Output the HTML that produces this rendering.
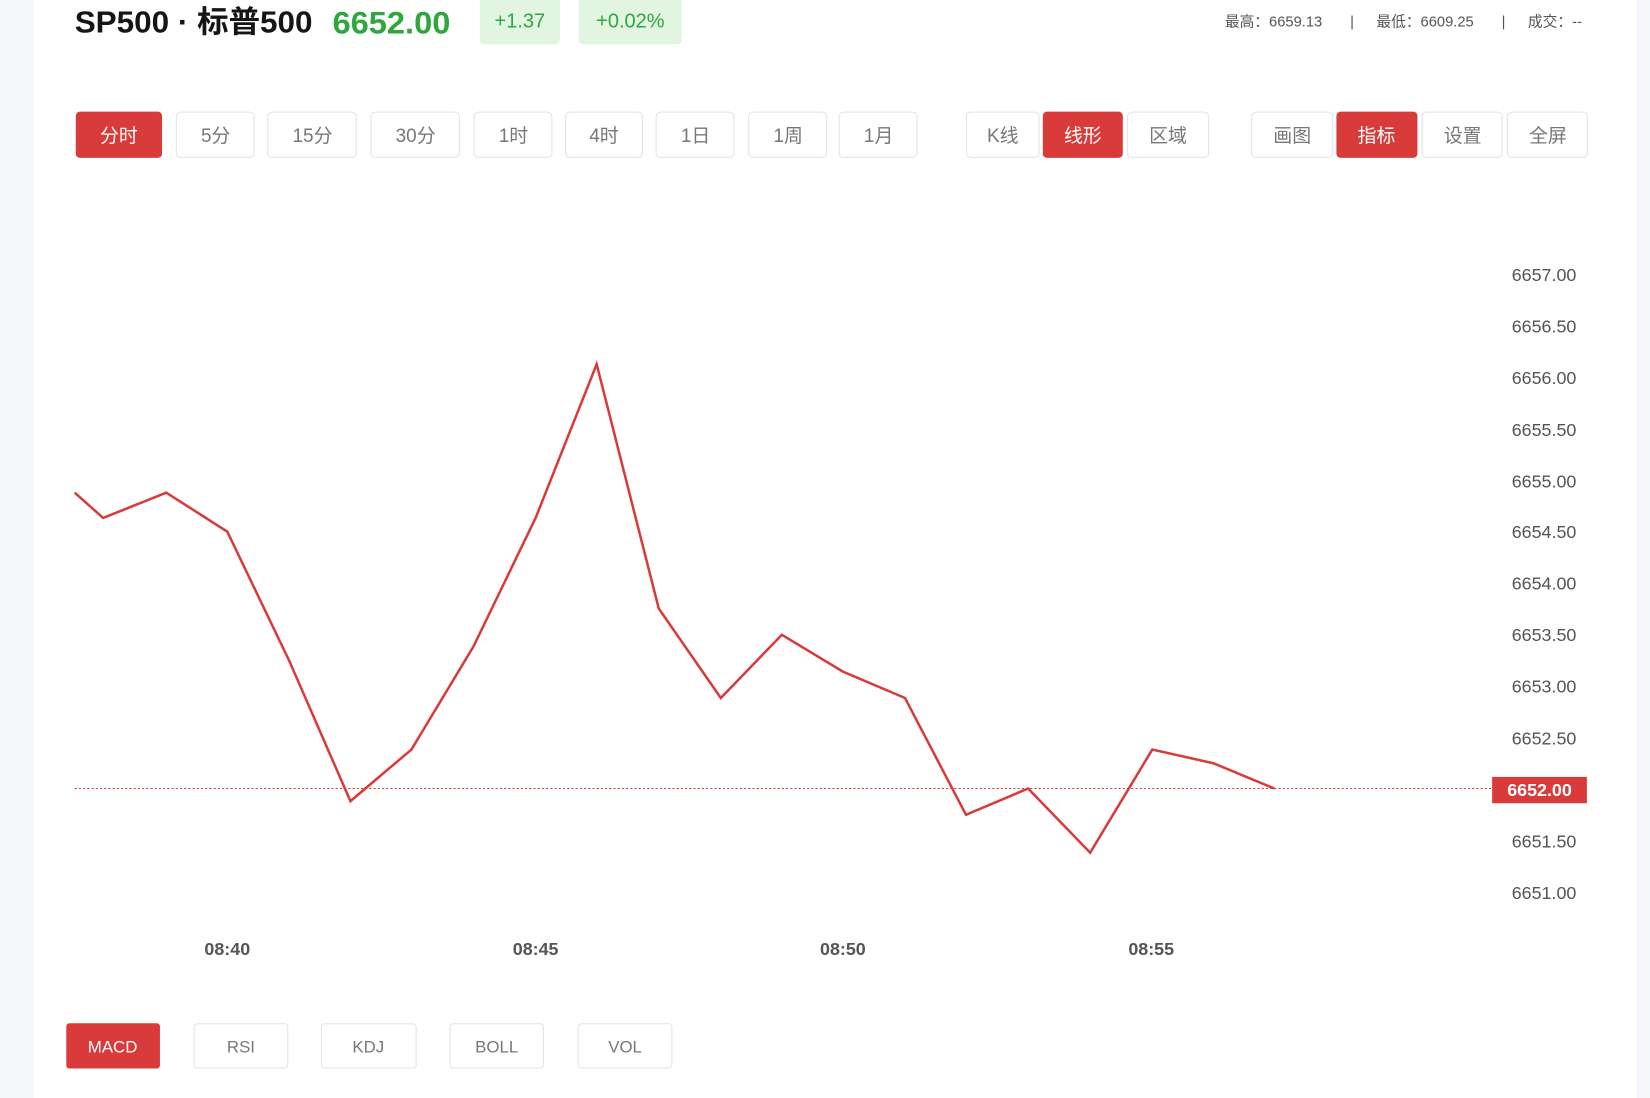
<!DOCTYPE html>
<html><head><meta charset="utf-8"><style>
html,body{margin:0;padding:0;background:#fff;width:1650px;height:1098px;overflow:hidden}
svg{display:block}
text{font-family:"Liberation Sans","Noto Sans CJK SC",sans-serif}
</style></head><body>
<svg width="1650" height="1098" viewBox="0 0 1568 1043" preserveAspectRatio="none" xmlns="http://www.w3.org/2000/svg">
<rect x="0" y="0" width="1568" height="1043" fill="#fff"/>
<rect x="0" y="0" width="32" height="1043" fill="#f5f6f9"/>
<rect x="1555" y="0" width="13" height="1043" fill="#f5f6f9"/>

<text x="71" y="31" font-size="29" font-weight="bold" fill="#151515" textLength="226" lengthAdjust="spacingAndGlyphs">SP500 · 标普500</text>
<text x="316" y="32" font-size="30" font-weight="bold" fill="#2ea83c" textLength="112" lengthAdjust="spacingAndGlyphs">6652.00</text>
<rect x="456" y="-6" width="76" height="48" rx="4" fill="#e1f5e1"/>
<text x="494" y="26" font-size="19" fill="#2ea83c" text-anchor="middle">+1.37</text>
<rect x="550" y="-6" width="98" height="48" rx="4" fill="#e1f5e1"/>
<text x="599" y="26" font-size="19" fill="#2ea83c" text-anchor="middle">+0.02%</text>

<g font-size="14" fill="#555">
<text x="1164" y="25">最高：6659.13</text>
<text x="1283" y="25">|</text>
<text x="1308" y="25">最低：6609.25</text>
<text x="1427" y="25">|</text>
<text x="1452" y="25">成交：--</text>
</g>

<g font-size="18" text-anchor="middle">
<rect x="72" y="106" width="82" height="44" rx="4" fill="#d93a3a"/><text x="113" y="135" fill="#fff">分时</text>
<g fill="#fff" stroke="#e3e3e3">
<rect x="167.5" y="106.5" width="74" height="43" rx="4"/>
<rect x="254.5" y="106.5" width="84" height="43" rx="4"/>
<rect x="352.5" y="106.5" width="84" height="43" rx="4"/>
<rect x="450.5" y="106.5" width="74" height="43" rx="4"/>
<rect x="537.5" y="106.5" width="73" height="43" rx="4"/>
<rect x="623.5" y="106.5" width="74" height="43" rx="4"/>
<rect x="711.5" y="106.5" width="74" height="43" rx="4"/>
<rect x="797.5" y="106.5" width="74" height="43" rx="4"/>
<rect x="918.5" y="106.5" width="69" height="43" rx="4"/>
<rect x="1071.5" y="106.5" width="77" height="43" rx="4"/>
<rect x="1189.5" y="106.5" width="77" height="43" rx="4"/>
<rect x="1351.5" y="106.5" width="76" height="43" rx="4"/>
<rect x="1432.5" y="106.5" width="76" height="43" rx="4"/>
</g>
<rect x="991" y="106" width="76" height="44" rx="4" fill="#d93a3a"/>
<rect x="1270" y="106" width="77" height="44" rx="4" fill="#d93a3a"/>
<g fill="#777">
<text x="205" y="135">5分</text>
<text x="297" y="135">15分</text>
<text x="395" y="135">30分</text>
<text x="488" y="135">1时</text>
<text x="574" y="135">4时</text>
<text x="661" y="135">1日</text>
<text x="749" y="135">1周</text>
<text x="835" y="135">1月</text>
<text x="953" y="135">K线</text>
<text x="1110" y="135">区域</text>
<text x="1228" y="135">画图</text>
<text x="1390" y="135">设置</text>
<text x="1471" y="135">全屏</text>
</g>
<text x="1029" y="135" fill="#fff">线形</text>
<text x="1308" y="135" fill="#fff">指标</text>
</g>

<g font-size="17" fill="#555" text-anchor="end">
<text x="1498" y="267">6657.00</text>
<text x="1498" y="316">6656.50</text>
<text x="1498" y="365">6656.00</text>
<text x="1498" y="414">6655.50</text>
<text x="1498" y="463">6655.00</text>
<text x="1498" y="511">6654.50</text>
<text x="1498" y="560">6654.00</text>
<text x="1498" y="609">6653.50</text>
<text x="1498" y="658">6653.00</text>
<text x="1498" y="707">6652.50</text>
<text x="1498" y="805">6651.50</text>
<text x="1498" y="854">6651.00</text>
</g>

<line x1="71" y1="749" x2="1418" y2="749" stroke="#d93a3a" stroke-width="1" stroke-dasharray="2,2"/>
<rect x="1418" y="738" width="90" height="25" fill="#d93a3a"/>
<text x="1463" y="756" font-size="17" font-weight="bold" fill="#fff" text-anchor="middle">6652.00</text>

<polyline fill="none" stroke="#d93a3a" stroke-width="2.4" stroke-linejoin="miter" points="71,468 98,492 158,468 216,505 275,628 333,761 391,712 450,614 509,492 567,346 626,578 685,663 743,603 801,638 860,663 918,774 977,749 1036,810 1095,712 1153,725 1211,749"/>

<g font-size="17" font-weight="bold" fill="#555" text-anchor="middle">
<text x="216" y="907">08:40</text>
<text x="509" y="907">08:45</text>
<text x="801" y="907">08:50</text>
<text x="1094" y="907">08:55</text>
</g>

<g font-size="16" text-anchor="middle">
<rect x="63" y="972" width="89" height="43" rx="3" fill="#d93a3a"/><text x="107" y="1000" fill="#fff">MACD</text>
<g fill="#fff" stroke="#e3e3e3">
<rect x="184.5" y="972.5" width="89" height="42" rx="3"/>
<rect x="305.5" y="972.5" width="90" height="42" rx="3"/>
<rect x="427.5" y="972.5" width="89" height="42" rx="3"/>
<rect x="549.5" y="972.5" width="89" height="42" rx="3"/>
</g>
<g fill="#777">
<text x="229" y="1000">RSI</text>
<text x="350" y="1000">KDJ</text>
<text x="472" y="1000">BOLL</text>
<text x="594" y="1000">VOL</text>
</g>
</g>
</svg>
</body></html>
